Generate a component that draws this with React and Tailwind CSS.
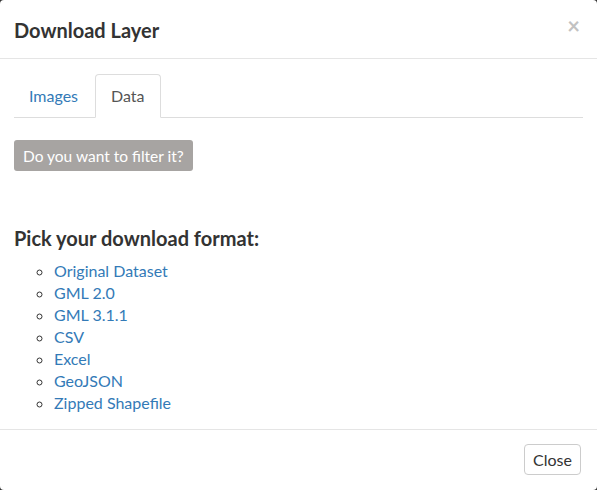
export default function App() {
  const items = ["Original Dataset", "GML 2.0", "GML 3.1.1", "CSV", "Excel", "GeoJSON", "Zipped Shapefile"];
  return (
    <div className="w-[597px] h-[490px] bg-[#333] overflow-hidden" style={{ fontFamily: "Lato, 'Open Sans', sans-serif" }}>
      <div className="w-[597px] h-[490px] bg-white rounded-[4px] text-[#333] text-[16px] flex flex-col">
        <div className="h-[59px] border-b border-[#e5e5e5] flex items-center justify-between pl-[14px] pr-[17px]">
          <h4 className="text-[20px] font-bold leading-[26px] mt-[1px]">Download Layer</h4>
          <span className="text-[#c2c2c2] text-[22px] font-bold leading-none -mt-[6px]">×</span>
        </div>
        <div className="px-[14px] pt-[15px] flex flex-col">
          <div className="flex border-b border-[#ddd] h-[44px]">
            <div className="px-[15px] flex items-center text-[#337ab7] h-[43px] mr-[2px]">Images</div>
            <div className="px-[15px] flex items-center h-[44px] border border-[#ddd] border-b-white rounded-t-[4px] bg-white text-[#555] -mb-[1px]">Data</div>
          </div>
          <div className="mt-[22px]">
            <button className="bg-[#a7a4a2] text-white rounded-[3px] px-[9px] h-[31px] text-[15.5px] leading-[20px]">Do you want to filter it?</button>
          </div>
          <h3 className="text-[20px] font-bold leading-[26px] mt-[54px]">Pick your download format:</h3>
          <ul className="mt-[9px] pl-[40px] list-[circle] text-[16px] leading-[22px] marker:text-[#333]">
            {items.map((t) => (
              <li key={t}><a className="text-[#337ab7]">{t}</a></li>
            ))}
          </ul>
        </div>
        <div className="mt-[15px] border-t border-[#e5e5e5] flex justify-end px-[16px] pt-[14px]">
          <button className="border border-[#ccc] rounded-[4px] h-[31px] px-[8px] text-[16px] text-[#333] bg-white">Close</button>
        </div>
      </div>
    </div>
  );
}
